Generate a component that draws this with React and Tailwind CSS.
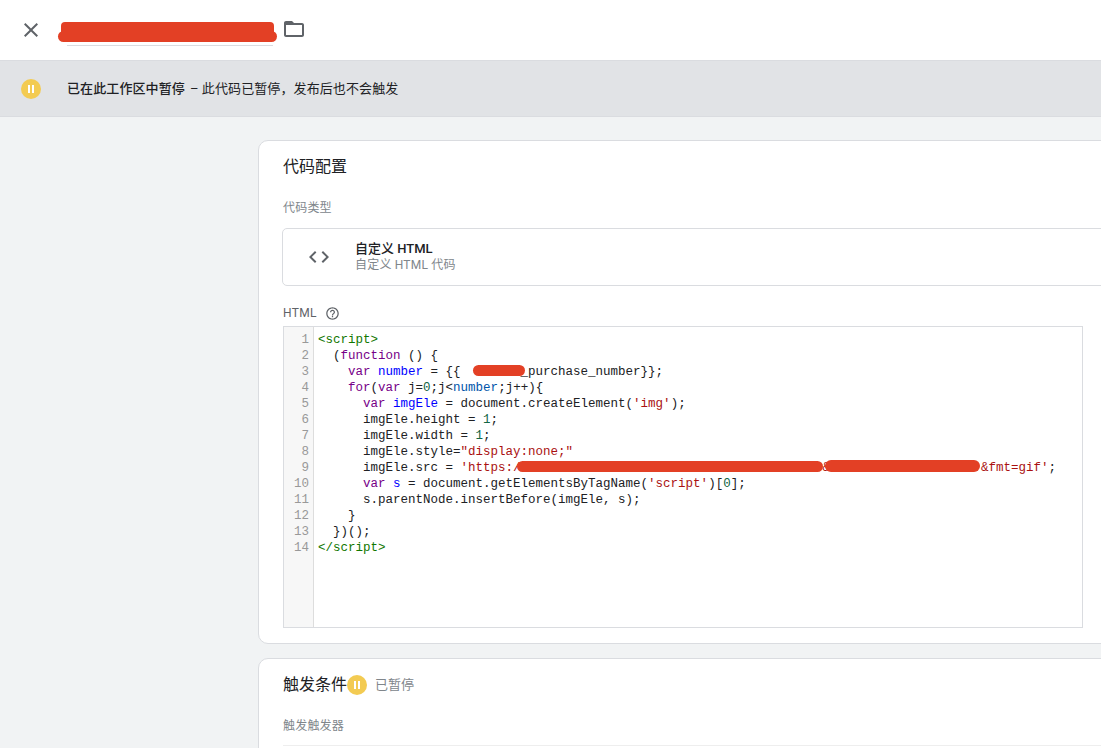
const SANS = "font-['Roboto','Noto_Sans_CJK_SC',sans-serif]";

function Pause({ size = "w-5 h-5" }) {
  return (
    <span className={`${size} rounded-full bg-[#f3cb52] flex items-center justify-center gap-[2px] shrink-0`}>
      <span className="w-[2px] h-2 bg-white" />
      <span className="w-[2px] h-2 bg-white" />
    </span>
  );
}

const K = ({ children }) => <span className="text-[#770088]">{children}</span>;
const D = ({ children }) => <span className="text-[#0000ff]">{children}</span>;
const V = ({ children }) => <span className="text-[#0055aa]">{children}</span>;
const N = ({ children }) => <span className="text-[#116644]">{children}</span>;
const S = ({ children }) => <span className="text-[#aa1111]">{children}</span>;
const T = ({ children }) => <span className="text-[#117700]">{children}</span>;
const Red = ({ className }) => (
  <span className={`inline-block h-[11px] rounded-full bg-[#e34025] align-[-1px] ${className}`} />
);

const lines = [
  <T>{"<script>"}</T>,
  <>{"  ("}<K>function</K>{" () {"}</>,
  <>{"    "}<K>var</K>{" "}<D>number</D>{" = {{"}<Red className="w-[52px] ml-[12px] mr-[-4px]" />{"_purchase_number}};"}</>,
  <>{"    "}<K>for</K>{"("}<K>var</K>{" j="}<N>0</N>{";j<"}<V>number</V>{";j++){"}</>,
  <>{"      "}<K>var</K>{" "}<D>imgEle</D>{" = document.createElement("}<S>'img'</S>{");"}</>,
  <>{"      imgEle.height = "}<N>1</N>{";"}</>,
  <>{"      imgEle.width = "}<N>1</N>{";"}</>,
  <>{"      imgEle.style="}<S>"display:none;"</S></>,
  <>
    {"      imgEle.src = "}<S>'https:/</S>
    <Red className="w-[306px] ml-[-4px] h-[10px]" />
    <S>&amp;</S>
    <Red className="w-[155px] ml-[-5px] h-[12px] mr-[1px]" />
    <S>&amp;fmt=gif'</S>{";"}
  </>,
  <>{"      "}<K>var</K>{" "}<D>s</D>{" = document.getElementsByTagName("}<S>'script'</S>{")["}<N>0</N>{"];"}</>,
  <>{"      s.parentNode.insertBefore(imgEle, s);"}</>,
  <>{"    }"}</>,
  <>{"  })();"}</>,
  <T>{"</script>"}</T>,
];

export default function App() {
  return (
    <div className={`h-[748px] w-[1101px] overflow-hidden bg-[#f1f3f4] ${SANS}`}>
      <header className="h-[61px] bg-white border-b border-[#dadce0] flex items-center">
        <svg viewBox="0 0 24 24" className="w-6 h-6 ml-[19px] fill-[#5f6368]">
          <path d="M19 6.41L17.59 5 12 10.59 6.41 5 5 6.41 10.59 12 5 17.59 6.41 19 12 13.41 17.59 19 19 17.59 13.41 12z" />
        </svg>
        <div className="relative ml-[24px] w-[206px] h-[46px] border-b border-[#dadce0] mt-[-14px]">
          <span className="absolute left-[-6px] top-[22px] w-[213px] h-[14px] rounded bg-[#e34025]" />
          <span className="absolute left-[-9px] top-[31px] w-[219px] h-[11px] rounded-full bg-[#e34025]" />
        </div>
        <svg viewBox="0 0 24 24" className="w-6 h-6 ml-[9px] mt-[-2px] fill-[#5f6368]">
          <path d="M20 6h-8l-2-2H4c-1.1 0-1.99.9-1.99 2L2 18c0 1.1.9 2 2 2h16c1.1 0 2-.9 2-2V8c0-1.1-.9-2-2-2zm0 12H4V8h16v10z" />
        </svg>
      </header>

      <div className="h-[56px] bg-[#e1e3e6] border-b border-[#dadce0] flex items-center pl-[21px] text-[13px] text-[#202124]">
        <Pause />
        <span className="ml-[26px] font-medium tracking-[0.1px]">已在此工作区中暂停</span>
        <span className="ml-[5px] tracking-[0.1px]">– 此代码已暂停，发布后也不会触发</span>
      </div>

      <main className="pl-[258px] pt-[23px]">
        <section className="w-[900px] h-[504px] bg-white border border-[#dadce0] rounded-[10px] pl-[24px] pt-[15px]">
          <h2 className="text-[16px] leading-[22px] text-[#202124]">代码配置</h2>
          <div className="mt-[21px] text-[12px] leading-[18px] text-[#80868b] tracking-[0.2px]">代码类型</div>
          <div className="mt-[11px] h-[58px] w-[900px] border border-[#dadce0] rounded-[5px] ml-[-1px] flex items-center">
            <svg viewBox="0 0 24 24" className="w-6 h-6 ml-[24px] fill-[#5f6368]">
              <path d="M9.4 16.6L4.8 12l4.6-4.6L8 6l-6 6 6 6 1.4-1.4zm5.2 0l4.6-4.6-4.6-4.6L16 6l6 6-6 6-1.4-1.4z" />
            </svg>
            <div className="ml-[24px]">
              <div className="text-[13px] leading-[17px] font-medium text-[#202124]">自定义 HTML</div>
              <div className="text-[12px] leading-[17px] text-[#80868b] tracking-[0.2px]">自定义 HTML 代码</div>
            </div>
          </div>
          <div className="mt-[17px] h-[20px] flex items-center text-[12px] text-[#5f6368] tracking-[0.3px]">
            HTML
            <svg viewBox="0 0 24 24" className="w-[15px] h-[15px] ml-[8px] fill-[#5f6368]">
              <path d="M11 18h2v-2h-2v2zm1-16C6.48 2 2 6.48 2 12s4.48 10 10 10 10-4.48 10-10S17.52 2 12 2zm0 18c-4.41 0-8-3.59-8-8s3.59-8 8-8 8 3.59 8 8-3.59 8-8 8zm0-14c-2.21 0-4 1.79-4 4h2c0-1.1.9-2 2-2s2 .9 2 2c0 2-3 1.75-3 5h2c0-2.25 3-2.5 3-5 0-2.21-1.79-4-4-4z" />
            </svg>
          </div>
          <div className="mt-[3px] w-[800px] h-[302px] border border-[#dadce0] flex font-['Liberation_Mono',monospace] text-[12.5px] leading-[16px]">
            <div className="w-[30px] h-full bg-[#f7f7f7] border-r border-[#dddddd] pt-[5px] pr-[4px] text-right text-[#999999] shrink-0">
              {lines.map((_, i) => (
                <div key={i}>{i + 1}</div>
              ))}
            </div>
            <div className="pl-[4px] pt-[5px] text-[#202124] whitespace-pre">
              {lines.map((l, i) => (
                <div key={i} className="h-4">{l}</div>
              ))}
            </div>
          </div>
        </section>

        <section className="mt-[14px] w-[900px] h-[200px] bg-white border border-[#dadce0] rounded-[10px] pl-[24px] pt-[15px]">
          <div className="flex items-center h-[22px]">
            <h2 className="text-[16px] text-[#202124]">触发条件</h2>
            <Pause />
            <span className="ml-[8px] text-[13px] text-[#80868b]">已暂停</span>
          </div>
          <div className="mt-[21px] text-[12px] leading-[18px] text-[#80868b] tracking-[0.2px]">触发触发器</div>
          <div className="mt-[10px] border-t border-[#eeeeee] w-[880px]" />
        </section>
      </main>
    </div>
  );
}
